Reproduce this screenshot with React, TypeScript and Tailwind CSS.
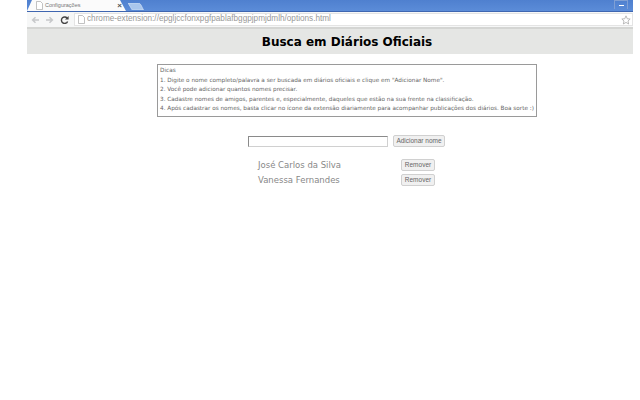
const tips = [
  'Dicas',
  '1. Digite o nome completo/palavra a ser buscada em diários oficiais e clique em "Adicionar Nome".',
  '2. Você pode adicionar quantos nomes precisar.',
  '3. Cadastre nomes de amigos, parentes e, especialmente, daqueles que estão na sua frente na classificação.',
  '4. Após cadastrar os nomes, basta clicar no ícone da extensão diariamente para acompanhar publicações dos diários. Boa sorte :)',
]

const names = ['José Carlos da Silva', 'Vanessa Fernandes']

function RemoveButton() {
  return (
    <button className="w-[34px] h-[12px] rounded-[2px] border border-[#d0d0d0] bg-[#f0f0f0] text-[6.5px] leading-none text-[#666]">
      Remover
    </button>
  )
}

function TabBar() {
  return (
    <div className="h-[12px] bg-gradient-to-b from-[#4f80cf] to-[#5b8cd8] border-b border-[#3f66b0] flex items-end justify-between overflow-hidden">
      <div className="flex items-end">
        {/* aba ativa */}
        <svg width="100" height="11" viewBox="0 0 100 11" className="block">
          <path d="M0 11 L5 0 H93 L99 11 Z" fill="#fbfbfb" />
        </svg>
        {/* nova aba */}
        <svg width="16" height="7" viewBox="0 0 16 7" className="block ml-[1px] mb-[1px]">
          <path d="M0 0 H10 Q12 0 13 2 L15.5 7 H5 Q3.5 7 3 5 Z" fill="#a9c6ec" stroke="#dce8f8" strokeWidth="0.6" />
        </svg>
      </div>
      <div className="w-[14px] h-[9px] mr-[5px] mb-[2px] border border-[#7f9fd4] border-b-0 flex items-center justify-center">
        <span className="w-[5px] h-[1px] bg-white" />
      </div>
    </div>
  )
}

function Toolbar() {
  return (
    <div className="h-[17px] bg-[#f6f7f7] border-b-2 border-[#d4d5d3] flex items-center">
      <svg width="42" height="10" viewBox="0 0 42 10" className="ml-[4px] shrink-0">
        <path d="M8 5 H2 M4.5 2.2 L1.6 5 L4.5 7.8" fill="none" stroke="#c6c8ca" strokeWidth="1.5" />
        <path d="M15 5 H21 M18.5 2.2 L21.4 5 L18.5 7.8" fill="none" stroke="#c6c8ca" strokeWidth="1.5" />
        <path d="M36.4 3.6 A3.2 3.2 0 1 0 36.6 6.4" fill="none" stroke="#444" strokeWidth="1.4" />
        <path d="M37.6 1 V4.6 H34 Z" fill="#444" />
      </svg>
      <div className="w-[560px] h-[13px] ml-[1px] bg-white border border-[#e4e4e4] flex items-center pl-[3px]">
        <svg width="7" height="9" viewBox="0 0 7 9" className="shrink-0">
          <path d="M0.5 0.5 H4.5 L6.5 2.5 V8.5 H0.5 Z" fill="#fff" stroke="#a8a8a8" strokeWidth="0.7" />
        </svg>
        <span className="ml-[2px] text-[8.2px] leading-none text-[#999] whitespace-nowrap">
          chrome-extension://epgljccfonxpgfpablafbggpjpmjdmlh/options.html
        </span>
        <svg width="10" height="10" viewBox="0 0 24 24" className="ml-auto mr-[1px] shrink-0">
          <path d="M12 2 L15 9 L22 9.6 L16.8 14.4 L18.4 21.6 L12 17.8 L5.6 21.6 L7.2 14.4 L2 9.6 L9 9 Z" fill="none" stroke="#a5a5a5" strokeWidth="1.8" />
        </svg>
      </div>
    </div>
  )
}

export default function App() {
  return (
    <div className="w-[640px] h-[400px] bg-white overflow-hidden font-['Liberation_Sans',sans-serif]">
      <div className="ml-[27px] w-[606px] relative">
        <TabBar />
        <Toolbar />
        <div className="absolute left-[3px] top-0 h-[11px] w-[92px] flex items-center pl-[6px]">
          <svg width="7" height="9" viewBox="0 0 7 9" className="shrink-0">
            <path d="M0.5 0.5 H4.5 L6.5 2.5 V8.5 H0.5 Z" fill="#fff" stroke="#a8a8a8" strokeWidth="0.7" />
          </svg>
          <span className="ml-[2px] text-[5.5px] text-[#777] whitespace-nowrap">Configurações</span>
          <span className="ml-auto text-[8px] leading-none font-bold text-[#555]">×</span>
        </div>

        <div className="h-[25px] bg-[#e5e6e4] flex items-center justify-center pl-[34px]">
          <h1 className="font-['DejaVu_Sans',sans-serif] font-bold text-[12px] text-black">Busca em Diários Oficiais</h1>
        </div>

        <div className="ml-[130px] mt-[10px] w-[380px] h-[53px] border border-[#9a9a9a] pt-[1px] pl-[2px] font-['DejaVu_Sans',sans-serif] text-[5.72px] text-[#666]">
          {tips.map((t) => (
            <p key={t} className="h-[9.5px] leading-[9.5px] whitespace-nowrap">{t}</p>
          ))}
        </div>

        <div className="mt-[18px] ml-[221px] flex items-center">
          <input className="w-[140px] h-[11px] border border-[#8a8a8a] border-r-[#d0d0d0] border-b-[#d0d0d0] bg-white" />
          <button className="ml-[5px] w-[52px] h-[12px] border border-[#d0d0d0] rounded-[2px] bg-[#f0f0f0] text-[6.5px] leading-none text-[#666] whitespace-nowrap">
            Adicionar nome
          </button>
        </div>

        <div className="mt-[12px] ml-[231px] flex flex-col gap-[3px]">
          {names.map((n) => (
            <div key={n} className="flex items-center h-[12px]">
              <span className="w-[143px] font-['DejaVu_Sans',sans-serif] text-[8.5px] text-[#888] whitespace-nowrap">{n}</span>
              <RemoveButton />
            </div>
          ))}
        </div>
      </div>
    </div>
  )
}
